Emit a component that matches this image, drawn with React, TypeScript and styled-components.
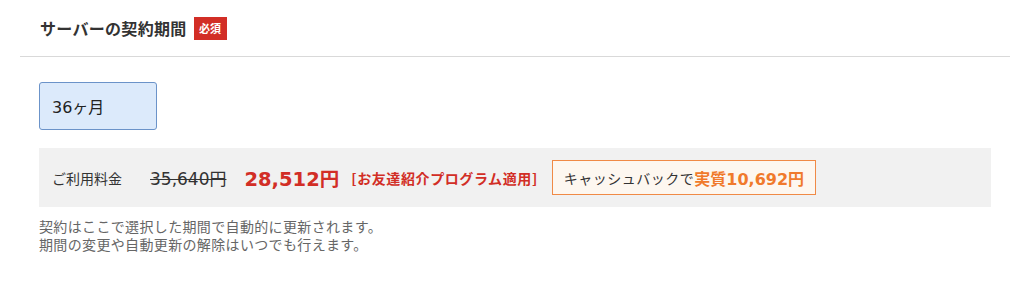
import styled, {createGlobalStyle} from 'styled-components'

const GlobalStyle = createGlobalStyle`
  body {
    margin: 0;
    background: #fff;
    font-family: 'Noto Sans CJK JP', 'Noto Sans', sans-serif;
    color: #333;
  }
`

const Section = styled.section`
  width: 1024px;
  height: 305px;
  display: flex;
  flex-direction: column;
`

const Header = styled.div`
  display: flex;
  align-items: center;
  gap: 7px;
  height: 56px;
  margin: 0 14px 0 20px;
  padding-left: 20px;
  border-bottom: 1px solid #d9d9d9;
`

const Title = styled.h2`
  margin: 0;
  font-size: 16px;
  font-weight: 700;
  color: #333;
  letter-spacing: 0.3px;
`

const Badge = styled.span`
  display: inline-flex;
  align-items: center;
  justify-content: center;
  width: 33px;
  height: 23px;
  background: #d22e26;
  color: #fff;
  font-size: 11px;
  font-weight: 700;
`

const Body = styled.div`
  padding: 25px 33px 0 39px;
  display: flex;
  flex-direction: column;
`

const PlanButton = styled.button<{$active?: boolean}>`
  width: 118px;
  height: 48px;
  box-sizing: border-box;
  text-align: left;
  padding: 0 0 0 12px;
  font-family: 'DejaVu Sans', 'Noto Sans CJK JP', sans-serif;
  font-size: 16px;
  color: #222;
  background: ${(p) => (p.$active ? '#dceafb' : '#fff')};
  border: 1px solid ${(p) => (p.$active ? '#6b93c9' : '#ccc')};
  border-radius: 3px;
`

const PriceBar = styled.div`
  margin-top: 18px;
  height: 59px;
  background: #f1f1f1;
  display: flex;
  align-items: center;
  padding-left: 13px;
`

const Label = styled.span`
  font-size: 14px;
  color: #333;
  width: 98px;
`

const OldPrice = styled.span`
  font-family: 'DejaVu Sans', 'Noto Sans CJK JP', sans-serif;
  font-size: 17px;
  color: #333;
  text-decoration: line-through;
  margin-right: 18px;
`

const NewPrice = styled.span`
  font-family: 'DejaVu Sans', 'Noto Sans CJK JP', sans-serif;
  font-size: 19.5px;
  font-weight: 700;
  color: #d22e26;
  margin-right: 12px;
`

const Program = styled.span`
  font-size: 14px;
  font-weight: 700;
  color: #d22e26;
  letter-spacing: 0.6px;
  margin-right: 14px;
`

const Cashback = styled.div`
  height: 35px;
  box-sizing: border-box;
  display: flex;
  align-items: center;
  padding: 0 11px;
  border: 1px solid #f08a46;
  background: #fdf7f0;
  font-size: 14px;
  color: #333;
  letter-spacing: 0.5px;
`

const Highlight = styled.span`
  font-family: 'DejaVu Sans', 'Noto Sans CJK JP', sans-serif;
  font-weight: 700;
  font-size: 16px;
  color: #f07a2c;
  letter-spacing: 0;
`

const Note = styled.p`
  margin: 10px 0 0;
  font-size: 14px;
  line-height: 18px;
  color: #666;
  letter-spacing: 0.35px;
`

export default function App() {
  return (
    <>
      <GlobalStyle />
      <Section>
        <Header>
          <Title>サーバーの契約期間</Title>
          <Badge>必須</Badge>
        </Header>
        <Body>
          <div>
            <PlanButton $active>36ヶ月</PlanButton>
          </div>
          <PriceBar>
            <Label>ご利用料金</Label>
            <OldPrice>35,640円</OldPrice>
            <NewPrice>28,512円</NewPrice>
            <Program>[お友達紹介プログラム適用]</Program>
            <Cashback>
              キャッシュバックで<Highlight>実質10,692円</Highlight>
            </Cashback>
          </PriceBar>
          <Note>
            契約はここで選択した期間で自動的に更新されます。
            <br />
            期間の変更や自動更新の解除はいつでも行えます。
          </Note>
        </Body>
      </Section>
    </>
  )
}
